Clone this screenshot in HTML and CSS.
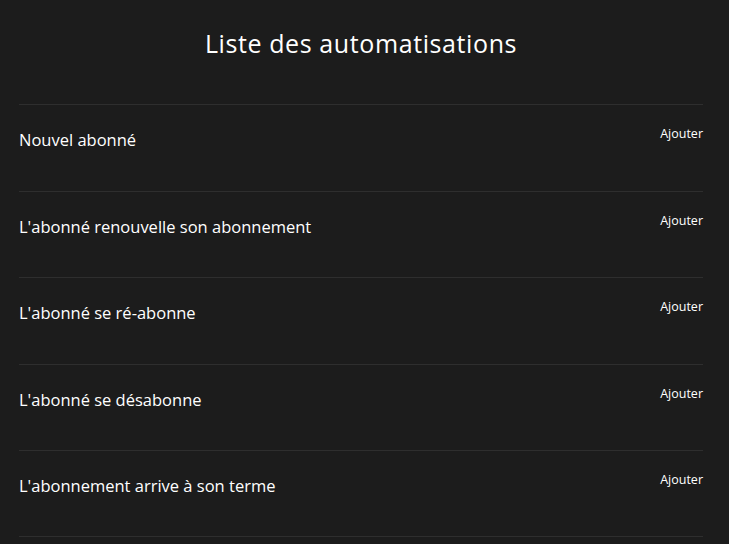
FILE: index.html
```html
<!DOCTYPE html>
<html lang="fr">
<head>
<meta charset="utf-8">
<title>Liste des automatisations</title>
<link rel="stylesheet" href="styles.css">
</head>
<body>
<main class="page">
  <h1 class="title">Liste des automatisations</h1>
  <ul class="list">
    <li class="row"><span class="label">Nouvel abonné</span><button class="add">Ajouter</button></li>
    <li class="row"><span class="label">L'abonné renouvelle son abonnement</span><button class="add">Ajouter</button></li>
    <li class="row"><span class="label">L'abonné se ré-abonne</span><button class="add">Ajouter</button></li>
    <li class="row"><span class="label">L'abonné se désabonne</span><button class="add">Ajouter</button></li>
    <li class="row"><span class="label">L'abonnement arrive à son terme</span><button class="add">Ajouter</button></li>
  </ul>
</main>
</body>
</html>
```
FILE: styles.css
```css
html, body {
  margin: 0;
  padding: 0;
  background: #1c1c1c;
  color: #ffffff;
  font-family: "Open Sans", "DejaVu Sans", sans-serif;
}
.page {
  padding: 0 26px 0 19px;
}
.title {
  margin: 0;
  padding-top: 27px;
  height: 104px;
  box-sizing: border-box;
  text-align: center;
  font-size: 25px;
  font-weight: 500;
  line-height: 32px;
  letter-spacing: 0.6px;
}
.list {
  list-style: none;
  margin: 0;
  padding: 0;
}
.row {
  box-sizing: border-box;
  height: 86.6px;
  border-top: 1px solid #2e2e2e;
  display: flex;
  justify-content: space-between;
  align-items: flex-start;
}
.row:last-child {
  border-bottom: 1px solid #2e2e2e;
}
.label {
  font-size: 16.5px;
  line-height: 24px;
  margin-top: 23px;
  font-weight: 500;
}
.add {
  background: none;
  border: none;
  padding: 0;
  margin-top: 20px;
  color: #ffffff;
  font-family: inherit;
  font-size: 12.5px;
  font-weight: 500;
  line-height: 18px;
  cursor: pointer;
}
```
